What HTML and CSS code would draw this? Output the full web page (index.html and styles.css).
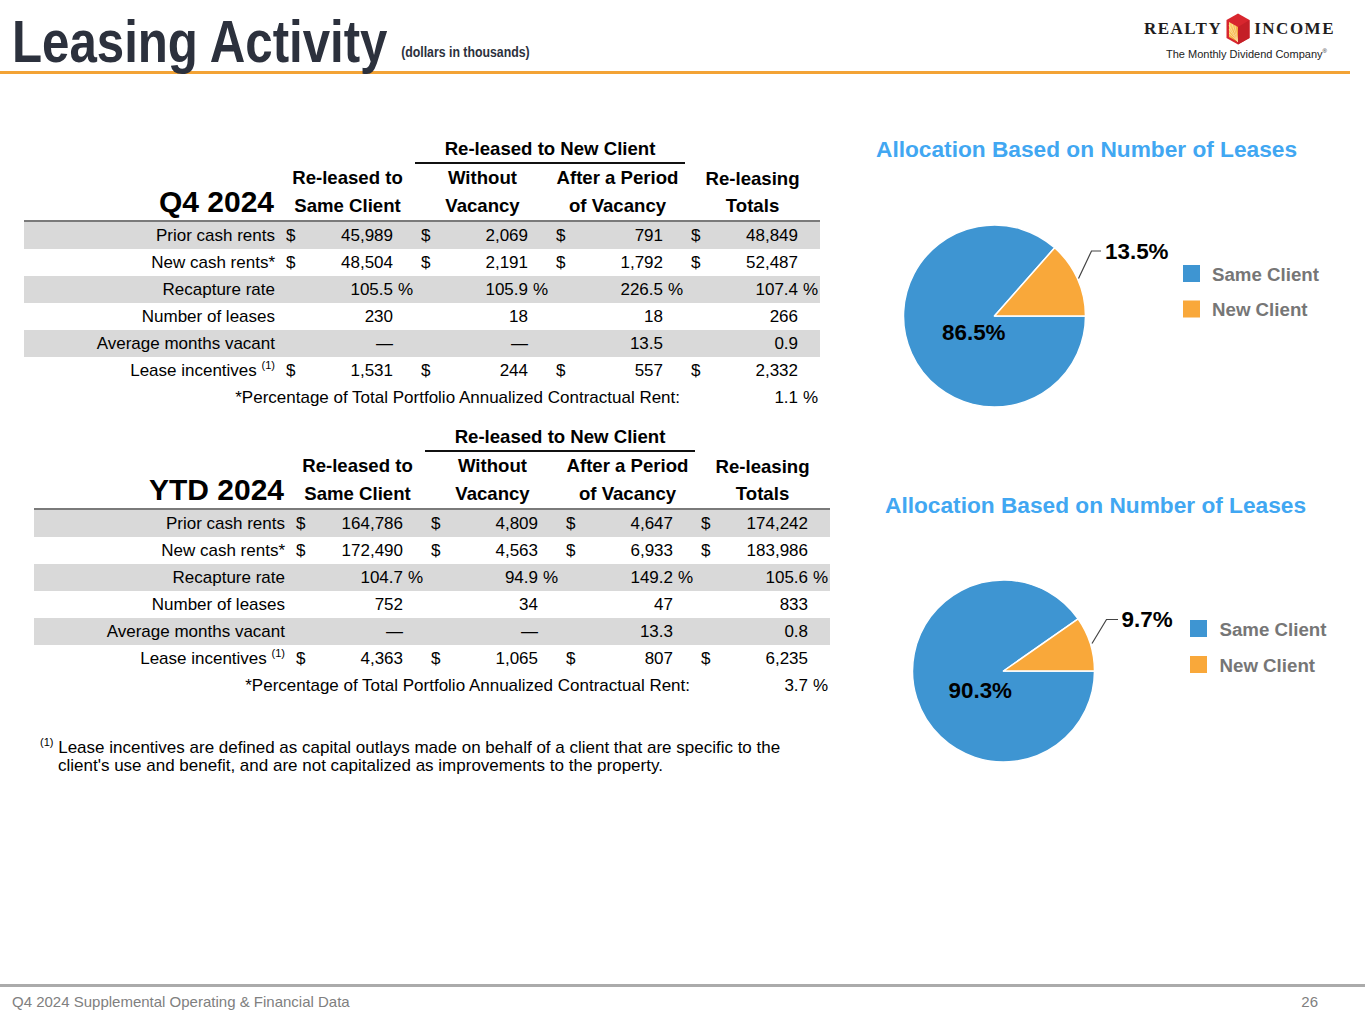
FILE: index.html
```html
<!DOCTYPE html>
<html lang="en">
<head>
<meta charset="utf-8">
<title>Leasing Activity</title>
<link rel="stylesheet" href="styles.css">
</head>
<body>
<div class="slide">
  <header class="top">
    <h1 class="title"><span class="title-inner">Leasing Activity <span class="subtitle">(dollars in thousands)</span></span></h1>
    <div class="logo">
      <div class="logo-mark">
        <span class="logo-word">REALTY</span>
        <svg class="logo-icon" viewBox="0 0 24 32" width="24" height="32" aria-hidden="true">
          <defs>
            <linearGradient id="sun" x1="0" y1="0" x2="1" y2="1">
              <stop offset="0" stop-color="#fde27a"/>
              <stop offset="1" stop-color="#f08a22"/>
            </linearGradient>
          </defs>
          <polygon points="12,0.5 23.5,7 23.5,25 12,31.5 0.5,25 0.5,7" fill="#d8262e"/>
          <polygon points="3,9 12,14 12,29 3,24" fill="url(#sun)"/>
          <g stroke="#fff4c2" stroke-width="0.7" opacity="0.8">
            <line x1="12" y1="29" x2="3" y2="12"/>
            <line x1="12" y1="29" x2="3" y2="16"/>
            <line x1="12" y1="29" x2="3" y2="20"/>
            <line x1="12" y1="29" x2="6" y2="11"/>
            <line x1="12" y1="29" x2="9" y2="12.5"/>
          </g>
          <polygon points="12,14 23.5,7 23.5,25 12,31.5" fill="#c41f27"/>
        </svg>
        <span class="logo-word">INCOME</span>
      </div>
      <div class="tagline">The Monthly Dividend Company<sup>®</sup></div>
    </div>
  </header>

  <main class="content">
    <section class="tables">
      <table class="lease">
        <colgroup>
          <col class="c-lbl">
          <col class="c-cur"><col class="c-val"><col class="c-pct">
          <col class="c-cur"><col class="c-val"><col class="c-pct">
          <col class="c-cur"><col class="c-val"><col class="c-pct">
          <col class="c-cur"><col class="c-val"><col class="c-pct">
        </colgroup>
        <thead>
          <tr class="h-grp">
            <th colspan="4"></th>
            <th colspan="6" class="grp">Re-leased to New Client</th>
            <th colspan="3"></th>
          </tr>
          <tr class="h-one">
            <th></th>
            <th colspan="3">Re-leased to</th>
            <th colspan="3">Without</th>
            <th colspan="3">After a Period</th>
            <th colspan="3" class="tot">Re-leasing</th>
          </tr>
          <tr class="h-two">
            <th class="period">Q4 2024</th>
            <th colspan="3">Same Client</th>
            <th colspan="3">Vacancy</th>
            <th colspan="3">of Vacancy</th>
            <th colspan="3">Totals</th>
          </tr>
        </thead>
        <tbody>
          <tr class="shade">
            <td class="lbl">Prior cash rents</td>
            <td class="cur">$</td><td class="val">45,989</td><td class="pct"></td>
            <td class="cur">$</td><td class="val">2,069</td><td class="pct"></td>
            <td class="cur">$</td><td class="val">791</td><td class="pct"></td>
            <td class="cur">$</td><td class="val">48,849</td><td class="pct"></td>
          </tr>
          <tr>
            <td class="lbl">New cash rents*</td>
            <td class="cur">$</td><td class="val">48,504</td><td class="pct"></td>
            <td class="cur">$</td><td class="val">2,191</td><td class="pct"></td>
            <td class="cur">$</td><td class="val">1,792</td><td class="pct"></td>
            <td class="cur">$</td><td class="val">52,487</td><td class="pct"></td>
          </tr>
          <tr class="shade">
            <td class="lbl">Recapture rate</td>
            <td class="cur"></td><td class="val">105.5</td><td class="pct">%</td>
            <td class="cur"></td><td class="val">105.9</td><td class="pct">%</td>
            <td class="cur"></td><td class="val">226.5</td><td class="pct">%</td>
            <td class="cur"></td><td class="val">107.4</td><td class="pct">%</td>
          </tr>
          <tr>
            <td class="lbl">Number of leases</td>
            <td class="cur"></td><td class="val">230</td><td class="pct"></td>
            <td class="cur"></td><td class="val">18</td><td class="pct"></td>
            <td class="cur"></td><td class="val">18</td><td class="pct"></td>
            <td class="cur"></td><td class="val">266</td><td class="pct"></td>
          </tr>
          <tr class="shade">
            <td class="lbl">Average months vacant</td>
            <td class="cur"></td><td class="val">—</td><td class="pct"></td>
            <td class="cur"></td><td class="val">—</td><td class="pct"></td>
            <td class="cur"></td><td class="val">13.5</td><td class="pct"></td>
            <td class="cur"></td><td class="val">0.9</td><td class="pct"></td>
          </tr>
          <tr>
            <td class="lbl">Lease incentives <sup class="note">(1)</sup></td>
            <td class="cur">$</td><td class="val">1,531</td><td class="pct"></td>
            <td class="cur">$</td><td class="val">244</td><td class="pct"></td>
            <td class="cur">$</td><td class="val">557</td><td class="pct"></td>
            <td class="cur">$</td><td class="val">2,332</td><td class="pct"></td>
          </tr>
          <tr>
            <td colspan="10" class="lbl">*Percentage of Total Portfolio Annualized Contractual Rent:</td>
            <td class="cur"></td><td class="val">1.1</td><td class="pct">%</td>
          </tr>
        </tbody>
      </table>

      <table class="lease ytd">
        <colgroup>
          <col class="c-lbl">
          <col class="c-cur"><col class="c-val"><col class="c-pct">
          <col class="c-cur"><col class="c-val"><col class="c-pct">
          <col class="c-cur"><col class="c-val"><col class="c-pct">
          <col class="c-cur"><col class="c-val"><col class="c-pct">
        </colgroup>
        <thead>
          <tr class="h-grp">
            <th colspan="4"></th>
            <th colspan="6" class="grp">Re-leased to New Client</th>
            <th colspan="3"></th>
          </tr>
          <tr class="h-one">
            <th></th>
            <th colspan="3">Re-leased to</th>
            <th colspan="3">Without</th>
            <th colspan="3">After a Period</th>
            <th colspan="3" class="tot">Re-leasing</th>
          </tr>
          <tr class="h-two">
            <th class="period">YTD 2024</th>
            <th colspan="3">Same Client</th>
            <th colspan="3">Vacancy</th>
            <th colspan="3">of Vacancy</th>
            <th colspan="3">Totals</th>
          </tr>
        </thead>
        <tbody>
          <tr class="shade">
            <td class="lbl">Prior cash rents</td>
            <td class="cur">$</td><td class="val">164,786</td><td class="pct"></td>
            <td class="cur">$</td><td class="val">4,809</td><td class="pct"></td>
            <td class="cur">$</td><td class="val">4,647</td><td class="pct"></td>
            <td class="cur">$</td><td class="val">174,242</td><td class="pct"></td>
          </tr>
          <tr>
            <td class="lbl">New cash rents*</td>
            <td class="cur">$</td><td class="val">172,490</td><td class="pct"></td>
            <td class="cur">$</td><td class="val">4,563</td><td class="pct"></td>
            <td class="cur">$</td><td class="val">6,933</td><td class="pct"></td>
            <td class="cur">$</td><td class="val">183,986</td><td class="pct"></td>
          </tr>
          <tr class="shade">
            <td class="lbl">Recapture rate</td>
            <td class="cur"></td><td class="val">104.7</td><td class="pct">%</td>
            <td class="cur"></td><td class="val">94.9</td><td class="pct">%</td>
            <td class="cur"></td><td class="val">149.2</td><td class="pct">%</td>
            <td class="cur"></td><td class="val">105.6</td><td class="pct">%</td>
          </tr>
          <tr>
            <td class="lbl">Number of leases</td>
            <td class="cur"></td><td class="val">752</td><td class="pct"></td>
            <td class="cur"></td><td class="val">34</td><td class="pct"></td>
            <td class="cur"></td><td class="val">47</td><td class="pct"></td>
            <td class="cur"></td><td class="val">833</td><td class="pct"></td>
          </tr>
          <tr class="shade">
            <td class="lbl">Average months vacant</td>
            <td class="cur"></td><td class="val">—</td><td class="pct"></td>
            <td class="cur"></td><td class="val">—</td><td class="pct"></td>
            <td class="cur"></td><td class="val">13.3</td><td class="pct"></td>
            <td class="cur"></td><td class="val">0.8</td><td class="pct"></td>
          </tr>
          <tr>
            <td class="lbl">Lease incentives <sup class="note">(1)</sup></td>
            <td class="cur">$</td><td class="val">4,363</td><td class="pct"></td>
            <td class="cur">$</td><td class="val">1,065</td><td class="pct"></td>
            <td class="cur">$</td><td class="val">807</td><td class="pct"></td>
            <td class="cur">$</td><td class="val">6,235</td><td class="pct"></td>
          </tr>
          <tr>
            <td colspan="10" class="lbl">*Percentage of Total Portfolio Annualized Contractual Rent:</td>
            <td class="cur"></td><td class="val">3.7</td><td class="pct">%</td>
          </tr>
        </tbody>
      </table>

      <p class="footnote"><sup class="fn-mark">(1)</sup> Lease incentives are defined as capital outlays made on behalf of a client that are specific to the<br>client's use and benefit, and are not capitalized as improvements to the property.</p>
    </section>

    <section class="charts">
      <div class="chart">
        <h2 class="chart-title">Allocation Based on Number of Leases</h2>
        <svg class="pie" viewBox="0 0 480 260" width="480" height="260">
          <path d="M134.5,153 L194.68,84.74 A91,91 0 1,0 225.5,153 Z" class="s-same"/>
          <path d="M134.5,153 L225.5,153 A91,91 0 0,0 194.68,84.74 Z" class="s-new"/>
          <polyline points="218.5,115.5 231.5,88 241,88" class="leader"/>
          <text x="245" y="95.5" class="p-lbl">13.5%</text>
          <text x="82" y="176.5" class="p-lbl">86.5%</text>
          <rect x="323" y="102" width="17" height="17" class="sw-same"/>
          <rect x="323" y="137.5" width="17" height="17" class="sw-new"/>
          <text x="352" y="118" class="lg">Same Client</text>
          <text x="352" y="153.3" class="lg">New Client</text>
        </svg>
      </div>
      <div class="chart second">
        <h2 class="chart-title">Allocation Based on Number of Leases</h2>
        <svg class="pie" viewBox="0 0 480 260" width="480" height="260">
          <path d="M134.5,152 L209.11,99.91 A91,91 0 1,0 225.5,152 Z" class="s-same"/>
          <path d="M134.5,152 L225.5,152 A91,91 0 0,0 209.11,99.91 Z" class="s-new"/>
          <polyline points="223,124.5 237.5,100.5 249,100.5" class="leader"/>
          <text x="252.5" y="108" class="p-lbl">9.7%</text>
          <text x="79.5" y="179" class="p-lbl">90.3%</text>
          <rect x="321" y="101" width="17" height="17" class="sw-same"/>
          <rect x="321" y="137" width="17" height="17" class="sw-new"/>
          <text x="350.5" y="117.3" class="lg">Same Client</text>
          <text x="350.5" y="152.5" class="lg">New Client</text>
        </svg>
      </div>
    </section>
  </main>

  <footer class="foot">
    <span>Q4 2024 Supplemental Operating &amp; Financial Data</span>
    <span>26</span>
  </footer>
</div>
</body>
</html>
```

FILE: styles.css
```css
* { box-sizing: content-box; }

html, body {
  margin: 0;
  padding: 0;
  background: #ffffff;
}

body {
  font-family: "Liberation Sans", Arial, sans-serif;
  color: #000;
}

.slide {
  width: 1365px;
  height: 1024px;
  overflow: hidden;
  display: flex;
  flex-direction: column;
}

/* ---------- header ---------- */
.top {
  width: 1350px;
  height: 71px;
  border-bottom: 3px solid #f3a335;
  display: flex;
  justify-content: space-between;
  align-items: flex-start;
  flex: none;
}

.title {
  margin: 0;
  padding: 13px 0 0 12px;
  font-family: "Liberation Sans", Arial, sans-serif;
  font-weight: 700;
  font-size: 60px;
  line-height: 58px;
  color: #2c313d;
  white-space: nowrap;
}

/* the original face is a condensed sans; narrow the regular face */
.title-inner {
  display: inline-block;
  transform: scaleX(0.82);
  transform-origin: 0 0;
}

.subtitle {
  font-size: 15px;
  font-weight: 700;
  vertical-align: 5px;
  color: #2c313d;
}

.logo {
  margin-right: 15px;
  padding-top: 13px;
  display: flex;
  flex-direction: column;
  align-items: center;
}

.logo-mark {
  display: flex;
  align-items: center;
  gap: 4px;
}

.logo-word {
  font-family: "Liberation Serif", "Times New Roman", serif;
  font-weight: 700;
  font-size: 17px;
  letter-spacing: 1.5px;
  color: #1f1d1e;
  line-height: 20px;
}

.logo-icon { display: block; }

.tagline {
  margin-top: 3px;
  margin-left: 14px;
  font-family: "Liberation Sans", Arial, sans-serif;
  font-size: 11px;
  line-height: 12px;
  color: #222;
}

.tagline sup {
  font-size: 6px;
  vertical-align: 5px;
  line-height: 0;
}

/* ---------- main ---------- */
.content {
  height: 910px;
  display: flex;
  flex: none;
}

.tables {
  width: 836px;
  padding: 62px 0 0 24px;
  flex: none;
}

.lease {
  border-collapse: separate;
  border-spacing: 0;
  table-layout: fixed;
  width: 796px;
  font-size: 17px;
  white-space: nowrap;
}

.lease.ytd {
  margin: 13px 0 0 10px;
}

.c-lbl { width: 256px; }
.c-cur { width: 20px; }
.c-val { width: 93px; }
.c-pct { width: 22px; }

.lease th {
  padding: 0;
  font-size: 18.6px;
  font-weight: 700;
  text-align: center;
  vertical-align: top;
}

.h-grp th { line-height: 26px; height: 28px; }
.h-grp th.grp { border-bottom: 2px solid #111; height: 26px; }
.h-one th { line-height: 28px; }
.h-one th.tot { padding-top: 1px; line-height: 27px; }
.h-two th {
  line-height: 28px;
  border-bottom: 2px solid #7a7a7a;
}

.h-two th.period {
  text-align: right;
  padding-right: 6px;
  font-size: 30px;
  line-height: 19px;
}

.lease td {
  padding: 0;
  line-height: 27px;
  height: 27px;
}

.lease tr.shade td { background: #d9d9d9; }

.lbl { text-align: right; padding-right: 5px !important; }
.cur { text-align: left; padding-left: 6px !important; }
.val { text-align: right; }
.pct { text-align: left; padding-left: 5px !important; }

.note {
  font-size: 11px;
  line-height: 0;
  vertical-align: 7px;
}

.footnote {
  margin: 40px 0 0 0;
  padding-left: 34px;
  text-indent: -18px;
  font-size: 17px;
  line-height: 18px;
  color: #000;
}

.fn-mark {
  font-size: 11px;
  line-height: 0;
  vertical-align: 7px;
}

/* ---------- charts ---------- */
.charts {
  padding-top: 61px;
  display: flex;
  flex-direction: column;
}

.chart-title {
  margin: 0 0 0 16px;
  font-size: 22.7px;
  line-height: 28px;
  font-weight: 700;
  color: #41a7f2;
  white-space: nowrap;
}

.chart.second {
  margin-top: 68px;
  padding-left: 9px;
}

.pie { display: block; }

.s-same { fill: #3e95d2; stroke: #ffffff; stroke-width: 1.5; stroke-linejoin: round; }
.s-new { fill: #f9a83a; stroke: #ffffff; stroke-width: 1.5; stroke-linejoin: round; }
.sw-same { fill: #3e95d2; }
.sw-new { fill: #f9a83a; }

.leader {
  fill: none;
  stroke: #444;
  stroke-width: 1.2;
}

.p-lbl {
  font-family: "Liberation Sans", Arial, sans-serif;
  font-weight: 700;
  font-size: 22.4px;
  fill: #000;
}

.lg {
  font-family: "Liberation Sans", Arial, sans-serif;
  font-weight: 700;
  font-size: 18.7px;
  fill: #767676;
}

/* ---------- footer ---------- */
.foot {
  height: 37px;
  border-top: 3px solid #ababab;
  display: flex;
  justify-content: space-between;
  padding: 6px 47px 0 12px;
  font-size: 15px;
  line-height: 17px;
  color: #808080;
  flex: none;
}
```
